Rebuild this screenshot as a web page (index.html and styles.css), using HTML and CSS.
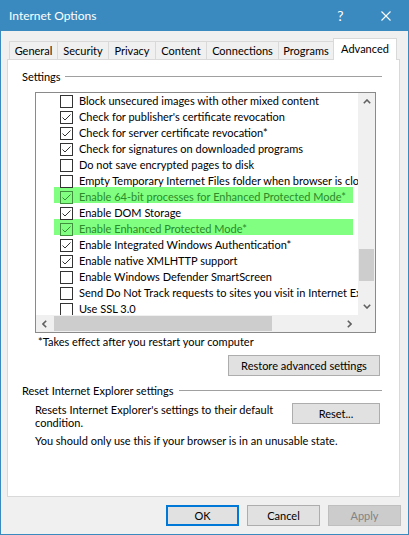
FILE: index.html
```html
<!DOCTYPE html>
<html>
<head>
<meta charset="utf-8">
<title>Internet Options</title>
<link rel="stylesheet" href="styles.css">
</head>
<body>
<div class="window">
  <div class="titlebar">
    <span class="title">Internet Options</span>
    <span class="tb-btn help">?</span>
    <span class="tb-btn close"><svg width="10" height="10" viewBox="0 0 10 10"><path d="M0.5 0.5 L9.5 9.5 M9.5 0.5 L0.5 9.5" stroke="#fff" stroke-width="1.1" fill="none"/></svg></span>
  </div>
  <div class="body">
    <div class="tabs">
      <div class="tab t-general">General</div>
      <div class="tab t-security">Security</div>
      <div class="tab t-privacy">Privacy</div>
      <div class="tab t-content">Content</div>
      <div class="tab t-connections">Connections</div>
      <div class="tab t-programs">Programs</div>
      <div class="tab active t-advanced">Advanced</div>
    </div>
    <div class="panel">
      <div class="group">
        <div class="group-head"><span>Settings</span><span class="rule"></span></div>
        <div class="listbox">
          <div class="list-main">
            <div class="items">
              <div class="row"><span class="cb"></span><span class="lbl">Block unsecured images with other mixed content</span></div>
              <div class="row"><span class="cb"><svg width="11" height="11" viewBox="0 0 11 11"><polyline points="1.5,5.5 4,8 9.5,2.5" fill="none" stroke="#333" stroke-width="1"/></svg></span><span class="lbl">Check for publisher's certificate revocation</span></div>
              <div class="row"><span class="cb"><svg width="11" height="11" viewBox="0 0 11 11"><polyline points="1.5,5.5 4,8 9.5,2.5" fill="none" stroke="#333" stroke-width="1"/></svg></span><span class="lbl">Check for server certificate revocation*</span></div>
              <div class="row"><span class="cb"><svg width="11" height="11" viewBox="0 0 11 11"><polyline points="1.5,5.5 4,8 9.5,2.5" fill="none" stroke="#333" stroke-width="1"/></svg></span><span class="lbl">Check for signatures on downloaded programs</span></div>
              <div class="row"><span class="cb"></span><span class="lbl">Do not save encrypted pages to disk</span></div>
              <div class="row"><span class="cb"></span><span class="lbl">Empty Temporary Internet Files folder when browser is closed</span></div>
              <div class="row hl"><span class="cb"><svg width="11" height="11" viewBox="0 0 11 11"><polyline points="1.5,5.5 4,8 9.5,2.5" fill="none" stroke="#3a8a3a" stroke-width="1"/></svg></span><span class="lbl">Enable 64-bit processes for Enhanced Protected Mode*</span></div>
              <div class="row"><span class="cb"><svg width="11" height="11" viewBox="0 0 11 11"><polyline points="1.5,5.5 4,8 9.5,2.5" fill="none" stroke="#333" stroke-width="1"/></svg></span><span class="lbl">Enable DOM Storage</span></div>
              <div class="row hl"><span class="cb"><svg width="11" height="11" viewBox="0 0 11 11"><polyline points="1.5,5.5 4,8 9.5,2.5" fill="none" stroke="#3a8a3a" stroke-width="1"/></svg></span><span class="lbl">Enable Enhanced Protected Mode*</span></div>
              <div class="row"><span class="cb"><svg width="11" height="11" viewBox="0 0 11 11"><polyline points="1.5,5.5 4,8 9.5,2.5" fill="none" stroke="#333" stroke-width="1"/></svg></span><span class="lbl">Enable Integrated Windows Authentication*</span></div>
              <div class="row"><span class="cb"><svg width="11" height="11" viewBox="0 0 11 11"><polyline points="1.5,5.5 4,8 9.5,2.5" fill="none" stroke="#333" stroke-width="1"/></svg></span><span class="lbl">Enable native XMLHTTP support</span></div>
              <div class="row"><span class="cb"></span><span class="lbl">Enable Windows Defender SmartScreen</span></div>
              <div class="row"><span class="cb"></span><span class="lbl">Send Do Not Track requests to sites you visit in Internet Explorer</span></div>
              <div class="row"><span class="cb"></span><span class="lbl">Use SSL 3.0</span></div>
            </div>
            <div class="vscroll">
              <div class="sb-btn"><svg width="8" height="5" viewBox="0 0 8 5"><polyline points="0.8,4.2 4,1 7.2,4.2" fill="none" stroke="#606060" stroke-width="1.6"/></svg></div>
              <div class="vtrack"><div class="vthumb"></div></div>
              <div class="sb-btn"><svg width="8" height="5" viewBox="0 0 8 5"><polyline points="0.8,0.8 4,4 7.2,0.8" fill="none" stroke="#606060" stroke-width="1.6"/></svg></div>
            </div>
          </div>
          <div class="list-foot">
            <div class="hscroll">
              <div class="sb-btn"><svg width="5" height="8" viewBox="0 0 5 8"><polyline points="4.2,0.8 1,4 4.2,7.2" fill="none" stroke="#606060" stroke-width="1.6"/></svg></div>
              <div class="htrack"><div class="hthumb"></div></div>
              <div class="sb-btn"><svg width="5" height="8" viewBox="0 0 5 8"><polyline points="0.8,0.8 4,4 0.8,7.2" fill="none" stroke="#606060" stroke-width="1.6"/></svg></div>
            </div>
            <div class="corner"></div>
          </div>
        </div>
        <div class="note">*Takes effect after you restart your computer</div>
        <div class="btn-row"><button class="btn restore">Restore advanced settings</button></div>
        <div class="group-head reset-head"><span>Reset Internet Explorer settings</span><span class="rule"></span></div>
        <div class="reset-row">
          <div class="reset-desc">Resets Internet Explorer's settings to their default<br>condition.</div>
          <button class="btn reset">Reset...</button>
        </div>
        <div class="warn">You should only use this if your browser is in an unusable state.</div>
      </div>
    </div>
    <div class="dlg-buttons">
      <button class="btn dlg ok">OK</button>
      <button class="btn dlg">Cancel</button>
      <button class="btn dlg disabled">Apply</button>
    </div>
  </div>
</div>
</body>
</html>
```

FILE: styles.css
```css
* { box-sizing: border-box; margin: 0; padding: 0; }
html, body { margin: 0; background: #ffffff; }
body {
  font-family: Lato, "Liberation Sans", Arial, sans-serif;
  font-size: 11px;
  color: #000;
}
.window {
  width: 409px;
  height: 535px;
  border: 1px solid #3a8ac0;
  border-top: 0;
  background: #f0f0f0;
  display: flex;
  flex-direction: column;
}
.titlebar {
  height: 31px;
  margin: 0 -1px;
  background: #3a8ac0;
  color: #fff;
  display: flex;
  align-items: center;
  padding-left: 9px;
}
.title { flex: 1; font-size: 12px; }
.tb-btn {
  height: 31px;
  display: flex;
  align-items: center;
  justify-content: center;
}
.help { width: 45px; font-size: 14px; }
.close { width: 46px; }
.body {
  flex: 1;
  display: flex;
  flex-direction: column;
  padding: 0 8px 0 6px;
}
.tabs {
  height: 28px;
  display: flex;
  align-items: flex-end;
  padding-left: 2px;
}
.tab {
  height: 18px;
  border-top: 1px solid #d9d9d9;
  border-left: 1px solid #d9d9d9;
  background: #f0f0f0;
  display: flex;
  align-items: center;
  justify-content: center;
  white-space: nowrap;
}
.tab.active {
  height: 22px;
  margin-bottom: -1px;
  background: #fff;
  border-right: 1px solid #d9d9d9;
  padding-bottom: 2px;
  position: relative;
  z-index: 1;
}
.t-general { width: 48px; }
.t-security { width: 51px; }
.t-privacy { width: 47px; }
.t-content { width: 51px; }
.t-connections { width: 72px; }
.t-programs { width: 55px; }
.t-advanced { width: 64px; }
.panel {
  height: 438px;
  border: 1px solid #d9d9d9;
  background: #fff;
  padding: 8px 17px 0 14px;
}
.group { display: flex; flex-direction: column; }
.group-head {
  height: 16px;
  display: flex;
  align-items: center;
  white-space: nowrap;
}
.group-head .rule {
  flex: 1;
  height: 1px;
  background: #a0a0a0;
  margin-left: 4px;
  margin-top: 1px;
}
.listbox {
  margin: 8px 0 0 13px;
  width: 341px;
  height: 241px;
  border: 1px solid #8a8a8a;
  display: flex;
  flex-direction: column;
}
.list-main { height: 222px; display: flex; }
.items { width: 322px; overflow: hidden; }
.row {
  height: 16px;
  line-height: 16px;
  padding-left: 24px;
  display: flex;
  align-items: flex-start;
  white-space: nowrap;
  position: relative;
}
.row .cb {
  width: 13px;
  height: 13px;
  margin-top: 2px;
  border: 1px solid #333;
  background: #fff;
  flex: none;
  display: flex;
  position: relative;
  z-index: 1;
}
.row .cb svg { display: block; }
.row .lbl { margin-left: 6px; position: relative; z-index: 1; }
.row.hl::before {
  content: "";
  position: absolute;
  left: 18px;
  top: -2px;
  width: 299px;
  height: 16px;
  background: #80ff80;
}
.row.hl .lbl { color: #2b8a2b; }
.row.hl .cb { background: #80ff80; border-color: #3f8f3f; }
.vscroll {
  width: 17px;
  background: #f0f0f0;
  display: flex;
  flex-direction: column;
}
.sb-btn {
  width: 17px;
  height: 17px;
  flex: none;
  display: flex;
  align-items: center;
  justify-content: center;
}
.sb-btn svg { display: block; }
.vtrack { flex: 1; padding: 139px 1px 0 1px; }
.vthumb { height: 32px; background: #cdcdcd; }
.list-foot { height: 17px; display: flex; }
.hscroll {
  width: 322px;
  display: flex;
  background: #f0f0f0;
}
.htrack { flex: 1; padding: 1px 0 1px 1px; }
.hthumb { width: 218px; height: 15px; background: #cdcdcd; }
.corner { width: 17px; background: #f0f0f0; }
.note {
  margin: 1px 0 0 16px;
  height: 16px;
  line-height: 16px;
}
.btn-row {
  margin-top: 5px;
  display: flex;
  justify-content: flex-end;
  padding-right: 2px;
}
.btn {
  font-family: inherit;
  font-size: 11px;
  color: #000;
  background: #e1e1e1;
  border: 1px solid #adadad;
  height: 21px;
  display: flex;
  align-items: center;
  justify-content: center;
}
.restore { width: 152px; }
.reset-head { margin-top: 6px; }
.reset-head .rule { margin-left: 6px; }
.reset-row {
  margin-top: 5px;
  display: flex;
  align-items: flex-start;
  padding-right: 2px;
}
.reset-desc {
  flex: 1;
  margin-left: 13px;
  line-height: 13px;
  white-space: nowrap;
}
.reset { width: 88px; }
.warn {
  margin: 4px 0 0 13px;
  line-height: 16px;
  height: 16px;
}
.dlg-buttons {
  margin: 8px -1px 0 0;
  display: flex;
  justify-content: flex-end;
  gap: 8px;
}
.dlg { width: 73px; }
.ok { border: 2px solid #0078d7; }
.disabled { background: #cccccc; border-color: #bfbfbf; color: #838383; }
```
